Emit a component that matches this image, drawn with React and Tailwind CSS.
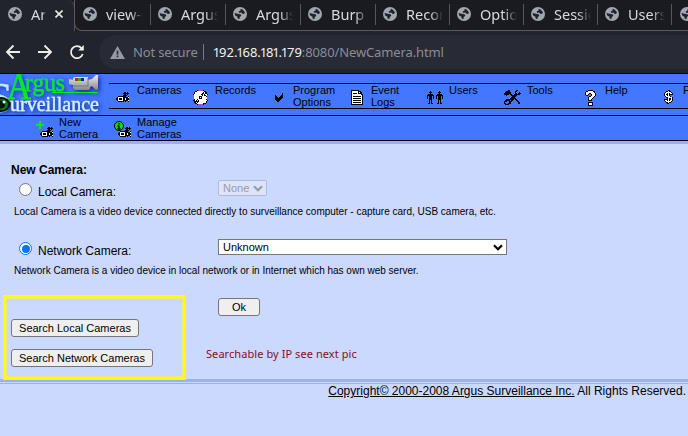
import React from "react";

const COLORS = { "#": "#000000", o: "#ffffff", p: "#b050c0" };

function Pixels({ rows }) {
  return (
    <svg
      width={rows[0].length}
      height={rows.length}
      viewBox={`0 0 ${rows[0].length} ${rows.length}`}
      shapeRendering="crispEdges"
      className="block shrink-0"
    >
      {rows.flatMap((row, y) =>
        [...row].map((c, x) =>
          COLORS[c] ? <rect key={x + "-" + y} x={x} y={y} width="1" height="1" fill={COLORS[c]} /> : null
        )
      )}
    </svg>
  );
}

const CAMERA = [
  "........##.#.",
  ".......######",
  "........##.#.",
  ".......####..",
  "..########..#",
  ".#ooooo#####o",
  "##o###o##o###",
  "##o###o##o###",
  ".#ooooo#####o",
  "..######.#..#",
];
const DISC = [
  "....#ppppp#....",
  "..##ooooooo##..",
  ".#oooooooo#o##.",
  ".#ooooooo##o##.",
  "#ooooooo##o#oo#",
  "poooooooo#o##op",
  "pooooo###oooo#p",
  "pooooo#o#ooooop",
  "pooooo###ooooop",
  "p#oo#oooooooo#p",
  "##o#o#oooooooo#",
  ".#####ooooooo#.",
  ".##o#oooooooo#.",
  "..##oooooo###..",
  "....#ppppp#....",
];
const CHECK = [
  ".......#",
  ".......#",
  "#.....##",
  "##...###",
  "###.####",
  "#######.",
  "######..",
  ".####...",
  "..##....",
];
const PAGE = [
  "########....",
  "#oooooo###..",
  "#oooooo#o##.",
  "#o####o####.",
  "#ooooooooo##",
  "#oooooooooo#",
  "#o########o#",
  "#oooooooooo#",
  "#o########o#",
  "#oooooooooo#",
  "#o########o#",
  "#oooooooooo#",
  "#o########o#",
  "#oooooooooo#",
  "############",
];
const USERS = [
  "...#........#...",
  "..###......###..",
  "...#........#...",
  ".#####....#####.",
  "#######..#######",
  "#.###.#..#.###.#",
  "#.###.#..#.###.#",
  "#.###.#..#.###.#",
  "..###......###..",
  "..#.#......#.#..",
  "..#.#......#.#..",
  "..#.#......#.#..",
  ".##.##....##.##.",
];
const TOOLS = [
  "....##......##...",
  "..####.....##....",
  ".######....#...#.",
  "#######....##.###",
  "#####.##..######.",
  "..#....######....",
  "........####.....",
  ".......####......",
  "......######.....",
  "..########.##....",
  ".#####.##...##...",
  "###..###.....##..",
  "#....##.......##.",
  "##..###.......##.",
  ".####............",
];
const HELP = [
  "...#####...",
  ".##ooooo##.",
  "#oooooooo#.",
  "#ooo##oooo#",
  "#oo#pp#ooo#",
  ".##..p#ooo#",
  "....##ooo#.",
  "...#oooo#..",
  "...#ooo#...",
  "...#oo#....",
  "...####....",
  "...........",
  "...#####...",
  "...#ooo#...",
  "...#ooo#...",
  "...#####...",
];
const DOLLAR = [
  "....##...",
  "..##o##..",
  ".#ooooo#.",
  "#oo#o#oo#",
  "#o##o####",
  "#oo#o#...",
  ".#oooo#..",
  "..##oooo#",
  "...#o##o#",
  "####o##o#",
  "#oo#o#oo#",
  ".#ooooo#.",
  "..##o##..",
  "...##....",
];

function Globe({ className = "" }) {
  return (
    <svg width="14" height="14" viewBox="0 0 14 14" className={"block shrink-0 " + className}>
      <circle cx="7" cy="7" r="7" fill="#a2a7ae" />
      <path d="M7.7 1.7 9.5 2.4 12 5.200 11 7 9.3 6.800 8.300 5.600 6.3 6.1 5.700 4.5 7.5 3.5z" fill="#202229" />
      <path d="M1.5 5.9 3.4 6.4 6 6.9 7.900 7.5 8.3 8.7 6.9 10 6.300 12.200 4.600 11.6 4.4 9.7 2.2 8.4z" fill="#202229" />
    </svg>
  );
}

const TABS = [
  ["view-s", "w-[75px]"],
  ["Argus S", "w-[75px]"],
  ["Argus S", "w-[75px]"],
  ["Burp S", "w-[75px]"],
  ["Record", "w-[74px]"],
  ["Option", "w-[74px]"],
  ["Sessio", "w-[74px]"],
  ["Users A", "w-[74px]"],
];

function Tabs() {
  return (
    <div className="flex h-[31px] bg-[#191b21] text-[14.5px] leading-[28px] text-[#d8d9dc]">
      <div className="flex h-[31px] w-[75px] shrink-0 items-start rounded-tr-lg border-r border-[#505259] bg-[#22242d] pl-2">
        <Globe className="mt-[7px]" />
        <div className="ml-[9px] w-[15px] overflow-hidden whitespace-nowrap mask-r-from-75%">Ar</div>
        <svg width="8" height="8" viewBox="0 0 8 8" className="mt-[10px] ml-[9px]">
          <path d="M.5.5l7 7M7.5.5l-7 7" stroke="#e8e8e8" strokeWidth="1.6" />
        </svg>
      </div>
      <div className="-ml-px flex h-[31px] grow overflow-hidden rounded-bl-lg border-b border-l border-[#5a5c62] bg-[#191b21] pl-px">
        {TABS.map(([label, width], i) => (
          <div key={i} className={"flex shrink-0 items-start pl-[7px] " + width}>
            <Globe className="mt-[7px]" />
            <div className="ml-[9px] w-[37px] overflow-hidden whitespace-nowrap mask-r-from-65%">{label}</div>
            <div className="mt-1 ml-auto h-[21px] w-px bg-[#55575d]" />
          </div>
        ))}
        <Globe className="mt-[7px] ml-[8px]" />
      </div>
    </div>
  );
}

function Host({ value }) {
  return (
    <span className="text-[#f1f1f1]">
      {[...value].map((c, i) => (
        <span key={i} className={c === "1" ? "-mx-[1.2px]" : ""}>{c}</span>
      ))}
    </span>
  );
}

function Toolbar() {
  return (
    <div className="flex h-[42px] items-center bg-[#22242d]">
      <div className="flex w-[99px] shrink-0 items-center pl-[5px]">
        <svg width="80" height="16" viewBox="0 0 80 16" fill="none" stroke="#eeeeea" strokeWidth="1.8">
          <path d="M15 8H2M8.500 1.500 2 8l6.500 6.500" />
          <path d="M33 8h13M39.500 1.500 46 8l-6.500 6.500" />
          <path d="M76.500 4.200A6 6 0 1 0 77.700 10" />
          <path d="M78.800 1v5.600h-5.600z" fill="#eeeeea" stroke="none" />
        </svg>
      </div>
      <div className="flex h-[34px] grow items-center overflow-hidden rounded-l-full bg-[#282a35] pl-[11px] text-[13px] whitespace-nowrap">
        <svg width="15" height="13" viewBox="0 0 15 13" className="block shrink-0">
          <path d="M7.500 0 15 13H0z" fill="#9699a1" />
          <path d="M7.500 4.500v4M7.500 9.500v1.700" stroke="#282a35" strokeWidth="1.600" />
        </svg>
        <div className="ml-2 w-[63px] pt-px tracking-[-0.15px] text-[#8b8d95]">Not secure</div>
        <div className="ml-[7px] h-4 w-px bg-[#777a82]" />
        <div className="ml-[10px] pt-px text-[#8b8d95]">
          <Host value="192.168.181.179" />
          <span className="tracking-[-0.12px]">:8080/NewCamera.html</span>
        </div>
      </div>
    </div>
  );
}

function Logo() {
  return (
    <svg width="109" height="41" viewBox="0 0 109 41" className="block shrink-0" fontFamily="Liberation Serif, serif">
      <defs>
        <filter id="shade" x="-10%" y="-10%" width="125%" height="130%">
          <feDropShadow dx="2" dy="2" stdDeviation="2" floodColor="#102a88" floodOpacity=".9" />
        </filter>
        <linearGradient id="metal" x2="0" y2="1">
          <stop stopColor="#eeeeee" />
          <stop offset="1" stopColor="#888888" />
        </linearGradient>
      </defs>
      <g filter="url(#shade)">
        <text x="-10" y="38" fontSize="42" fill="#c4e6ff" stroke="#c4e6ff" strokeWidth=".4" textLength="22" lengthAdjust="spacingAndGlyphs">S</text>
        <text x="7" y="25" fontSize="37" fill="#00ed17" stroke="#00ed17" strokeWidth=".4" textLength="24" lengthAdjust="spacingAndGlyphs">A</text>
        <text x="25" y="17" fontSize="25" fill="#00ed17" stroke="#00ed17" strokeWidth=".3" textLength="40" lengthAdjust="spacingAndGlyphs">rgus</text>
        <text x="10" y="37" fontSize="21" fill="#d8efff" stroke="#d8efff" strokeWidth=".3" textLength="89" lengthAdjust="spacingAndGlyphs">urveillance</text>
        <path d="M52 18.500h46" stroke="#00ed17" />
        <path d="M69 5l4 1V4l2-1h13v3l4-1 4-4h2v14l-2 1-4-4-2 1v2l-2 1H75l-2-2v-3l-4-1z" fill="url(#metal)" />
        <path d="M73 12h15V4" stroke="#777" fill="none" />
      </g>
      <path d="M75 4h3v3h-3z" fill="#f11" />
      <path d="M78 4h3v3h-3z" fill="#0c0" />
      <path d="M81 4h3v3h-3z" fill="#11e" />
      <ellipse cx="1" cy="30.500" rx="9.500" ry="7.500" fill="#07160b" />
      <ellipse cx="2" cy="30.500" rx="6" ry="5.500" fill="#127329" />
      <ellipse cx="1" cy="30.500" rx="4" ry="4" fill="#071409" />
      <circle cx="4" cy="28" r="1.500" fill="#d8ffe0" />
    </svg>
  );
}

const MENU = [
  [CAMERA, "Cameras", "pt-[8px]"],
  [DISC, "Records", "pt-[6px]"],
  [CHECK, "Program Options", "pt-[9px]"],
  [PAGE, "Event Logs", "pt-[6px]"],
  [USERS, "Users", "pt-[7px]"],
  [TOOLS, "Tools", "pt-[6px]"],
  [HELP, "Help", "pt-[6px]"],
  [DOLLAR, "Purchase", "pt-[6px]"],
];

function Header() {
  return (
    <div className="border-t border-black bg-[#4477ff] text-[11px] leading-[12px] text-black">
      <div className="flex h-[41px] overflow-hidden">
        <Logo />
        <div className="mt-[9px] flex h-[26px] grow overflow-hidden border-y border-black">
          {MENU.map(([rows, label, pad]) => (
            <div key={label} className="flex w-[78px] shrink-0">
              <div className={"flex w-[28px] shrink-0 items-start justify-center pr-px " + pad}>
                <Pixels rows={rows} />
              </div>
              <div className="w-[48px]">{label}</div>
            </div>
          ))}
        </div>
      </div>
      <div className="flex h-[26px] border-y border-black pl-[31px]">
        <div className="flex w-[78px]">
          <div className="relative w-[28px] shrink-0 pt-[11px] pl-[9px]">
            <Pixels rows={CAMERA} />
            <svg width="8" height="8" className="absolute top-[5px] left-[5px]">
              <path d="M4 0v8M0 4h8" stroke="#00ee11" strokeWidth="2" />
            </svg>
          </div>
          <div className="w-[45px]">New Camera</div>
        </div>
        <div className="flex w-[78px]">
          <div className="relative w-[28px] shrink-0 pt-[11px] pl-[9px]">
            <Pixels rows={CAMERA} />
            <svg width="10" height="10" className="absolute top-[5px] left-[5px]">
              <circle cx="5" cy="5" r="4.500" fill="#00dd11" stroke="#000" />
              <path d="M5 2v1.500M5 4.500v3.500M3.500 5H5M3.500 8h3" stroke="#000" strokeWidth="1.300" />
            </svg>
          </div>
          <div>Manage Cameras</div>
        </div>
      </div>
    </div>
  );
}

function Chevron() {
  return (
    <svg width="10" height="7" viewBox="0 0 10 7" className="block shrink-0">
      <path d="M1 1.200 5 5.200 9 1.200" fill="none" stroke="currentColor" strokeWidth="2.200" />
    </svg>
  );
}

function Button({ children, className }) {
  return (
    <button className={"block h-[18px] rounded-[3px] border border-[#767676] bg-[#efefef] text-center text-[11px] leading-[16px] whitespace-nowrap text-black " + className}>
      {children}
    </button>
  );
}

export default function App() {
  return (
    <div className="h-[436px] w-[688px] overflow-hidden bg-[#ccd9ff] font-['Liberation_Sans',Arial,sans-serif] text-black">
      <div className="font-['Noto_Sans',sans-serif]">
        <Tabs />
        <Toolbar />
      </div>
      <Header />
      <div className="h-[3px] bg-[#99b0ff]" />

      <div className="relative h-[235px] pt-[18px] pl-[11px]">
        <div className="h-[18px] text-[12px] leading-[16px] font-bold">New Camera:</div>
        <div className="flex h-[25px]">
          <div className="mt-[3px] ml-[8px] h-[13px] w-[13px] rounded-full border border-[#767676] bg-white" />
          <div className="ml-[6px] w-[180px] pt-[4px] text-[12px] leading-[16px]">Local Camera:</div>
          <div className="flex h-[16px] w-[49px] items-center justify-between rounded-[2px] border border-[#b2bbd5] bg-[#dce4fa] pr-[3px] pl-[4px] text-[11px] leading-[14px] text-[#979ba8]">
            None <Chevron />
          </div>
        </div>
        <div className="h-[34px] pl-[3px] text-[10px] leading-[14px]">
          Local Camera is a video device connected directly to surveillance computer - capture card, USB camera, etc.
        </div>
        <div className="flex h-[25px]">
          <div className="mt-[3px] ml-[8px] flex h-[13px] w-[13px] items-center justify-center rounded-full border border-[#0075ff] bg-white">
            <div className="h-[8px] w-[8px] rounded-full bg-[#0075ff]" />
          </div>
          <div className="ml-[6px] w-[180px] pt-[4px] text-[12px] leading-[16px]">Network Camera:</div>
          <div className="flex h-[16px] w-[289px] items-center justify-between border border-[#767676] bg-white pr-[3px] pl-[4px] text-[11px] leading-[14px]">
            Unknown <Chevron />
          </div>
        </div>
        <div className="h-[34px] pl-[3px] text-[10px] leading-[14px]">
          Network Camera is a video device in local network or in Internet which has own web server.
        </div>
        <Button className="ml-[207px] w-[42px]">Ok</Button>
        <Button className="mt-[3px] w-[128px]">Search Local Cameras</Button>
        <div className="mt-[12px] flex">
          <Button className="w-[142px]">Search Network Cameras</Button>
          <div className="-mt-[4px] ml-[53px] font-['Noto_Sans',sans-serif] text-[11px] leading-[18px] tracking-[0.07px] whitespace-nowrap text-[#850f22]">
            Searchable by IP see next pic
          </div>
        </div>
        <div className="absolute top-[151px] left-[3px] z-10 h-[85px] w-[183px] border-[3px] border-[#ffff00] shadow-[inset_0_0_0_1px_#ffff0080]" />
      </div>

      <div className="h-[3px] bg-[#99b0ff]" />
      <div className="mt-px h-px bg-[#99b0ff]" />
      <div className="pr-[2px] text-right text-[12px] leading-[14px]">
        <span className="underline">Copyright© 2000-2008 Argus Surveillance Inc.</span> All Rights Reserved.
      </div>
    </div>
  );
}
